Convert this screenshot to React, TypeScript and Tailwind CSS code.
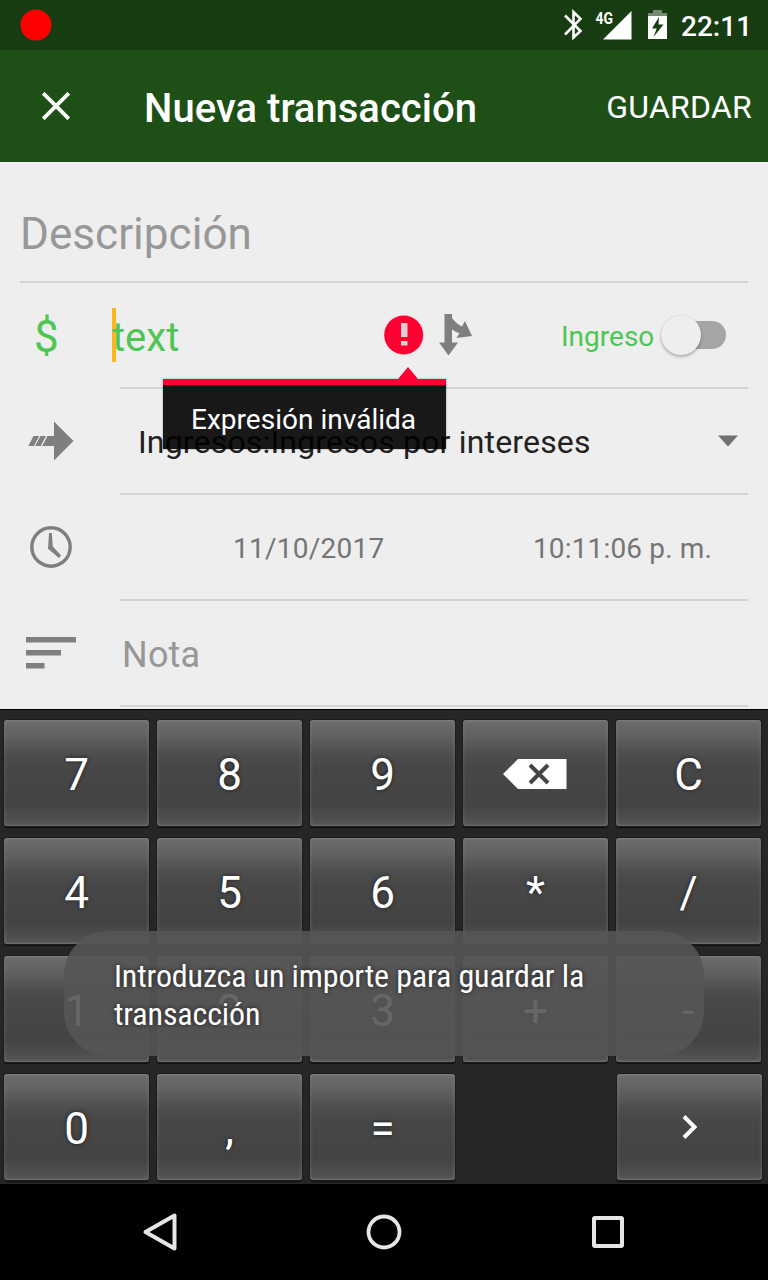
import React from "react";

const BackspaceIcon = () => (
  <svg width="64" height="30" viewBox="0 0 64 30" className="relative left-[-1px] top-[1px]">
    <path d="M0 15 15 0H63.5V30H15Z" fill="#fff" />
    <path d="M27 6 45 24M45 6 27 24" stroke="#454545" strokeWidth="4" />
  </svg>
);

const ChevronIcon = () => (
  <svg width="16" height="24" viewBox="0 0 16 24">
    <path d="M2 1.500 12.500 12 2 22.500" stroke="#fff" strokeWidth="4" fill="none" />
  </svg>
);

function Key({ children, className = "pt-1" }: { children: React.ReactNode; className?: string }) {
  return (
    <button
      className={`flex h-[106px] w-[145px] items-center justify-center rounded-[3px] bg-[linear-gradient(180deg,#6c6c6c_0%,#626262_14%,#4c4c4c_34%,#474747_45%,#434343_80%,#555555_100%)] text-[44px] leading-none text-white shadow-[0_0_0_1px_#1c1c1c,0_2px_1px_#101010,inset_0_0_4px_rgba(150,150,150,0.4),inset_0_1px_0_rgba(150,150,150,0.2),inset_0_-1px_1px_rgba(150,150,150,0.25)] [text-shadow:0_0_4px_rgba(0,0,0,0.6)] ${className}`}
    >
      {children}
    </button>
  );
}

function StatusBar() {
  return (
    <div className="flex h-[50px] items-center bg-[#173c12] pl-[20px] pr-[17px]">
      <svg width="32" height="50" viewBox="0 0 32 50">
        <circle cx="16" cy="25" r="15.500" fill="#ff0000" />
      </svg>
      <svg className="ml-auto mr-[-8px]" width="92" height="50" viewBox="0 0 92 50">
        <path d="M1 15.500 16.500 31 9.500 37.500V12L16.500 18.800 1 34.500" fill="none" stroke="#fff" strokeWidth="2.600" />
        <text x="31.500" y="23.500" fill="#fff" fontFamily="Roboto, sans-serif" fontSize="16" fontWeight="700" textLength="17.500" lengthAdjust="spacingAndGlyphs">4G</text>
        <path d="M39 39.500 67.500 11V39.500Z" fill="#fff" />
      </svg>
      <svg width="20" height="50" viewBox="0 0 20 50">
        <path d="M5 10H14V13H19V17H0V13H5Z" fill="#74896f" />
        <path d="M0 16H19V39H0Z" fill="#fff" />
        <path d="M11 17 4 28.500H8.700L5.500 37 15.500 24.500H10.500Z" fill="#173c12" />
      </svg>
      <span className="ml-[13px] mt-[3px] w-[70px] whitespace-nowrap text-[28px] font-medium leading-[33px] text-white">22:11</span>
    </div>
  );
}

function AppBar() {
  return (
    <header className="flex h-[112px] items-center bg-[#1d4f17] pl-[42px] pr-4 text-white">
      <svg width="28" height="28" viewBox="0 0 28 28">
        <path d="M1.200 1.200 26.800 26.800M26.800 1.200 1.200 26.800" stroke="#fff" strokeWidth="3.800" />
      </svg>
      <h1 className="ml-[74px] mt-[5px] whitespace-nowrap text-[40px] font-medium leading-[48px] tracking-[0.03px]">Nueva transacción</h1>
      <button className="ml-auto mt-[1px] text-[32px] leading-[38px] tracking-[0.25px]">GUARDAR</button>
    </header>
  );
}

function ErrorPopup() {
  return (
    <div className="absolute left-[163px] top-[366px] z-10 w-[283px]">
      <svg className="ml-[234px] block" width="22" height="13" viewBox="0 0 22 13">
        <path d="M1 13 11 1 21 13Z" fill="#ff0033" />
      </svg>
      <div className="flex h-[70px] items-start border-t-[6px] border-[#ff0033] bg-black/90 pl-7 pt-[18px] text-[28px] leading-[34px] tracking-[0.02px] text-white shadow-[0_0_2px_rgba(0,0,0,0.35)]">
        Expresión inválida
      </div>
    </div>
  );
}

function Form() {
  return (
    <main className="flex h-[547px] flex-col bg-[#eeeeee] px-5">
      <div className="flex h-[121px] items-center border-b-2 border-[#d3d3d3] pt-[24px] text-[44px] leading-[52px] tracking-[0.05px] text-[#979797]">Descripción</div>

      <div className="flex h-[106px]">
        <div className="flex w-[100px] items-center pl-[14px] pt-[1px] text-[44px] leading-none text-[#4dc654]">$</div>
        <div className="relative flex flex-1 items-center border-b-2 border-[#d3d3d3]">
          <div className="-ml-[8px] h-[54px] w-[4px] bg-[#ffb61e]" />
          <span className="relative -ml-[4px] w-[271px] pt-[6px] text-[40px] leading-[48px] text-[#4dc654]">text</span>
          <svg width="42" height="42" viewBox="0 0 42 42">
            <circle cx="20.700" cy="21" r="19.500" fill="#ff0033" />
            <path d="M18 9H24.500V23H18ZM18 27H24.500V31.500H18Z" fill="#e3cdd1" />
          </svg>
          <svg className="ml-[13px]" width="36" height="42" viewBox="0 0 36 42">
            <path d="M6.500 0H14V4C17 8 20 10.500 24 12.500L27 7 34 22 18.500 24 21.500 19C18 18.500 16 17 14 15V28.500H20L10.500 41.500 1 28.500H6.500Z" fill="#7f7f7f" />
          </svg>
          <span className="ml-[87px] mt-[4px] whitespace-nowrap text-[28px] leading-[34px] text-[#4dc654]">Ingreso</span>
          <div className="relative ml-[8px] h-[40px] w-[65px]">
            <div className="absolute left-[12px] top-[6px] h-[28px] w-[52px] rounded-full bg-[#a5a5a5]" />
            <div className="absolute left-[-1px] top-0 size-[40px] rounded-full bg-[#eeeeee] shadow-[0_2px_3px_rgba(0,0,0,0.25),0_0_1px_rgba(0,0,0,0.2)]" />
          </div>
        </div>
      </div>

      <div className="flex h-[106px]">
        <div className="flex w-[100px] items-center pb-[2px] pl-[8px]">
          <svg width="48" height="42" viewBox="0 0 48 42">
            <path d="M5.500 16H11.300L6 26H.3ZM12.500 16H18L12.700 26H7.200ZM19.500 16H26V1.500L45.500 21 26 40.500V26H14.200Z" fill="#7f7f7f" />
          </svg>
        </div>
        <div className="flex flex-1 items-center border-b-2 border-[#d3d3d3] pl-[18px] pr-[9px]">
          <span className="mt-[1px] whitespace-nowrap text-[32px] leading-[38px] tracking-[0.17px] text-[#212121]">Ingresos:Ingresos por intereses</span>
          <svg className="mb-[1px] ml-auto" width="22" height="12" viewBox="0 0 22 12">
            <path d="M1 .5H21L11 11.500Z" fill="#707070" />
          </svg>
        </div>
      </div>

      <div className="flex h-[106px]">
        <div className="flex w-[100px] items-center pb-[2px] pl-[9px]">
          <svg width="44" height="44" viewBox="0 0 44 44">
            <circle cx="22" cy="22" r="19.200" fill="none" stroke="#7f7f7f" strokeWidth="3.400" />
            <path d="M20 8H22.800L23.800 21.500 32 30.500 30 33 19 23.800Z" fill="#7f7f7f" />
          </svg>
        </div>
        <div className="flex flex-1 items-center border-b-2 border-[#d3d3d3] pl-[113px] pr-[36px] pt-[3px] text-[28px] leading-[34px] text-[#757575]">
          <span className="tracking-[0.24px]">11/10/2017</span>
          <span className="ml-auto tracking-[0.15px]">10:11:06 p. m.</span>
        </div>
      </div>

      <div className="flex h-[106px]">
        <div className="flex w-[100px] items-center pb-[2px] pl-[6px]">
          <svg width="50" height="32" viewBox="0 0 50 32">
            <path d="M0 0H50V5.500H0ZM0 13H35V18.500H0ZM0 26H18.500V31.500H0Z" fill="#7f7f7f" />
          </svg>
        </div>
        <div className="flex flex-1 items-center border-b-2 border-[#d3d3d3] pl-[2px] pt-[3px] text-[36px] leading-[42px] tracking-[0.2px] text-[#979797]">Nota</div>
      </div>
    </main>
  );
}

function Keyboard() {
  return (
    <section className="grid h-[475px] grid-cols-[repeat(5,145px)] content-start gap-x-2 gap-y-3 border-t border-black bg-[#262626] pl-1 pt-[10px]">
      {["7", "8", "9"].map((k) => <Key key={k}>{k}</Key>)}
      <Key className="pt-0"><BackspaceIcon /></Key>
      {["C", "4", "5", "6", "*", "/", "1", "2", "3", "+", "-", "0", ",", "="].map((k) => <Key key={k}>{k}</Key>)}
      <span />
      <Key className="ml-px pt-0"><ChevronIcon /></Key>
    </section>
  );
}

function Toast() {
  return (
    <div className="absolute left-[64px] top-[931px] h-[125px] w-[640px] rounded-[44px] bg-[#555555]/90 pl-[50px] pt-[26px]">
      <p className="whitespace-nowrap font-['Roboto_Condensed',Roboto,sans-serif] text-[32px] leading-[38px] tracking-[-0.13px] text-white [font-stretch:75%] [text-shadow:0_0_5px_rgba(0,0,0,0.7)]">
        Introduzca un importe para guardar la
        <br />
        transacción
      </p>
    </div>
  );
}

function NavBar() {
  return (
    <nav className="flex h-24 items-center justify-between bg-black px-[142px]">
      <svg width="36" height="40" viewBox="0 0 36 40">
        <path d="M3.500 20 32.500 3.500V36.500Z" fill="none" stroke="#e6e6e6" strokeWidth="4" strokeLinejoin="round" />
      </svg>
      <svg width="36" height="36" viewBox="0 0 36 36">
        <circle cx="18" cy="18" r="15.500" fill="none" stroke="#e6e6e6" strokeWidth="3.800" />
      </svg>
      <svg width="36" height="36" viewBox="0 0 36 36">
        <rect x="4" y="4" width="28" height="28" rx="1" fill="none" stroke="#e6e6e6" strokeWidth="4" />
      </svg>
    </nav>
  );
}

export default function App() {
  return (
    <div className="relative h-[1280px] w-[768px] overflow-hidden font-[Roboto,sans-serif]">
      <StatusBar />
      <AppBar />
      <Form />
      <Keyboard />
      <NavBar />
      <ErrorPopup />
      <Toast />
    </div>
  );
}
